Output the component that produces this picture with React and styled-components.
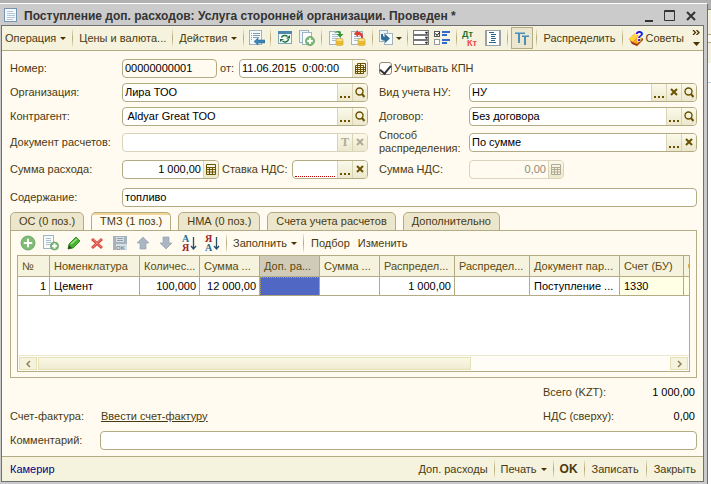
import React, { useState } from "react";
import styled, { createGlobalStyle, css } from "styled-components";

const GlobalStyle = createGlobalStyle`
  * {
    box-sizing: border-box;
  }

  body {
    margin: 0;
    background: #b0b0b0;
    color: #4a3a10;
    font-family: "Liberation Sans", Arial, sans-serif;
    font-size: 11px;
    line-height: 13px;
  }

  button, input {
    font: inherit;
    color: inherit;
    margin: 0;
    padding: 0;
  }

  button {
    border: 0;
    background: none;
    white-space: nowrap;
  }

  svg {
    display: block;
    flex: none;
  }
`

const Desktop = styled.div`
  display: flex;
  min-height: 100vh;
  padding-top: 3px;
`

const Backdrop = styled.div`
  width: 3px;
  margin-top: 6px;
  border-top: 1px solid #8a8468;
  background: linear-gradient(#f5f2dd 24px, #b3ab84 24px 25px, #fffbf0 25px 32px, #b3ab84 32px 33px, #f5f2dd 33px 53px, #fff 53px 72px, #b8cfe0 72px 73px, #fff 73px);
`

const Window = styled.div`
  flex: 1;
  min-width: 0;
  display: flex;
  flex-direction: column;
  padding: 0 3px 2px 1px;
  border-top: 1px solid #fff;
  border-right: 1px solid #6e6e6e;
  background: #cbcbcb;
`

const TitleBar = styled.header`
  display: flex;
  align-items: center;
  height: 21px;
  padding: 2px 3px 0 3px;
  color: #333;

  & h1 {
    flex: 1;
    margin: 0 0 0 6px;
    font-size: 12px;
    line-height: 14px;
    white-space: nowrap;
  }

  & button {
    width: 21px;
    height: 16px;
    display: flex;
    align-items: center;
    justify-content: center;
  }
`

const Content = styled.main`
  flex: 1;
  display: flex;
  flex-direction: column;
  border: 1px solid #707070;
  background: #fffbf0;
`

const Toolbar = styled.div`
  display: flex;
  align-items: center;
  height: 25px;
  background: #f5f2dd;
  border-bottom: 1px solid #b3ab84;
`

const ToolButton = styled.button`
  display: flex;
  align-items: center;
  justify-content: center;
  gap: ${props => props.$gap || 4}px;
  height: 22px;
  padding: 0 ${props => props.$pad || 3}px;
  font-weight: ${props => (props.$bold ? "bold" : "normal")};
  font-size: ${props => (props.$bold ? 12 : 11)}px;

  ${props => props.$pressed && css`
    background: #ebe6cd;
    border: 1px solid #b3ab84;
  `}
`

const Separator = styled.span`
  width: 1px;
  height: 18px;
  margin: 0 3px;
  background: linear-gradient(#efe9cd, #b3a878, #efe9cd);
`

const Overflow = styled.button`
  display: flex;
  flex-direction: column;
  align-items: center;
  gap: 7px;
  margin-left: auto;
  padding-right: 3px;
`

const Form = styled.div`
  display: grid;
  grid-template-columns: 112px minmax(0, 246fr) 101px minmax(0, 228fr);
  grid-template-rows: 24px 24px 24px 28px 26px 30px;
  align-items: center;
  padding: 5px 6px 0 8px;
`

const Label = styled.label`
  white-space: nowrap;
  ${props => props.$right && "padding-left: 11px;"}
`

const Line = styled.div`
  display: flex;
  align-items: center;
  ${props => props.$wide && "grid-column: 2 / -1;"}
`

const InlineLabel = styled.label`
  padding: 0 5px 0 3px;
  white-space: nowrap;
`

const Box = styled.div`
  display: flex;
  flex: ${props => (props.$width ? "none" : "1")};
  width: ${props => (props.$width ? props.$width + "px" : "auto")};
  min-width: 0;
  height: 19px;
  border: 1px solid ${props => (props.$disabled ? "#d9d4bb" : "#b3ab84")};
  border-radius: 4px;
  background: ${props => (props.$readonly ? "#fffbf0" : "#fff")};
  overflow: hidden;

  & input {
    flex: 1;
    width: 100%;
    min-width: 0;
    border: 0;
    outline: 0;
    padding: 0 2px;
    background: none;
    color: ${props => (props.$disabled ? "#8f8b7c" : "#000")};
    text-align: ${props => (props.$right ? "right" : "left")};
  }

  & input:required {
    margin: 0 2px 1px;
    border-bottom: 1px dotted #c00000;
  }

  & button {
    flex: none;
    width: 15px;
    display: flex;
    align-items: center;
    justify-content: center;
    color: ${props => (props.$disabled ? "#b0ab96" : "#6a5200")};
    border-left: 1px solid #d9d4b5;
    background: linear-gradient(#fbf9ea, #ece8cd);
  }
`

const TypeMark = styled.span`
  font: bold 12px "Liberation Serif", serif;
`

const Check = styled.label`
  grid-column: 3 / -1;
  display: flex;
  align-items: center;
  gap: 2px;
  padding-left: 11px;

  & input {
    appearance: none;
    display: flex;
    align-items: flex-start;
    justify-content: center;
    width: 13px;
    height: 13px;
    border: 1px solid #8f8a72;
    border-radius: 3px;
    background: #fff;
  }

  & input:checked::after {
    content: "";
    width: 5px;
    height: 9px;
    border: solid #333;
    border-width: 0 2px 2px 0;
    transform: rotate(40deg);
  }
`

const Tabs = styled.div`
  display: flex;
  gap: 7px;
  margin: 0 6px -1px 8px;
`

const Tab = styled.button`
  height: 19px;
  padding: 0 8px;
  border: 1px solid #b3ab84;
  border-radius: 5px 5px 0 0;
  background: #ece6cd;

  &[aria-selected="true"] {
    border-bottom-color: #fffbf0;
    background: linear-gradient(#f3d596 2px, #fffbf0 2px);
  }
`

const Panel = styled.section`
  flex: 1;
  display: flex;
  flex-direction: column;
  margin: 0 6px 0 8px;
  padding: 0 6px 5px;
  border: 1px solid #b3ab84;
`

const Commands = styled.div`
  display: flex;
  align-items: center;
  height: 24px;
`

const RowCommands = styled.div`
  display: flex;
  gap: 1px;
`

const GridFrame = styled.div`
  flex: 1;
  display: flex;
  flex-direction: column;
  border: 1px solid #b3ab84;
  background: #fff;
  overflow: hidden;
`

const GridBody = styled.div`
  flex: 1;
  min-height: 98px;
`

const Grid = styled.table`
  width: 100%;
  table-layout: fixed;
  border-collapse: separate;
  border-spacing: 0;

  & th, & td {
    padding: 0 3px 0 4px;
    border-right: 1px solid #b3ab84;
    border-bottom: 1px solid #b3ab84;
    overflow: hidden;
    white-space: nowrap;
  }

  & th:last-child, & td:last-child {
    border-right: 0;
  }
`

const Head = styled.th`
  height: 21px;
  font-weight: normal;
  text-align: left;
  color: #5c4a10;
  background: ${props => (props.$current ? "#d0cbb8" : "#f5f2dd")};
`

const Cell = styled.td`
  height: 19px;
  color: #000;
  text-align: ${props => (props.$right ? "right" : "left")};
  background: ${props => (props.$tint ? "#ffffe6" : "#fff")};

  ${props => props.$current && css`
    background: #5068c4;
    outline: 1px dotted #b3a040;
    outline-offset: -1px;
  `}
`

const ScrollBar = styled.div`
  display: flex;
  align-items: center;
  gap: 1px;
  height: 16px;
  padding: 1px;
  border-top: 1px solid #ece8d0;
  background: #fffdf5;

  & button {
    display: flex;
    align-items: center;
    justify-content: center;
    width: 18px;
    height: 13px;
    border: 1px solid #e6e0b8;
    background: #f5f2dd;
  }

  & span {
    flex: 433;
    height: 13px;
    border: 1px solid #e6e0b8;
    background: linear-gradient(#faf8e6, #efebd2);
  }

  & i {
    flex: 198;
  }
`

const Summary = styled.div`
  display: grid;
  grid-template-columns: 90px 1fr 100px 54px;
  grid-template-rows: 24px 24px 24px;
  align-items: center;
  padding: 2px 6px 4px 8px;
`

const Total = styled.output`
  padding-right: 2px;
  color: #000;
  text-align: right;
`

const TotalLabel = styled.span`
  grid-column: 3;
`

const Link = styled.a`
  padding-left: 1px;
  color: #4a3a10;
`

const StatusBar = styled.footer`
  display: flex;
  align-items: center;
  height: 25px;
  padding: 0 3px 0 8px;
  border-top: 1px solid #b3ab84;
  background: #f5f2dd;

  & > strong {
    flex: 1;
    font-weight: normal;
    color: #00008b;
  }
`

const Arrow = () => (
  <svg width="6" height="3" viewBox="0 0 6 3"><path d="M0 0h6L3 3z" fill="#4a3000" /></svg>
)

const Icon = ({ children }) => (
  <svg width="16" height="16" viewBox="0 0 16 16" fill="none">{children}</svg>
)

const Page = ({ x = 1, y = 1, w = 11, h = 13 }) => (
  <g>
    <rect x={x + 0.5} y={y + 0.5} width={w} height={h} fill="#f6fafc" stroke="#9db4c3" />
    <path d={`M${x + 3} ${y + 3.5}h${w - 5}M${x + 3} ${y + 5.5}h${w - 5}M${x + 3} ${y + 7.5}h${w - 5}M${x + 3} ${y + 9.5}h${w - 5}`} stroke="#a9bfcb" />
  </g>
)

const Plus = ({ cx, cy, r }) => (
  <g>
    <circle cx={cx} cy={cy} r={r} fill="#7fbd76" stroke="#5f9a62" strokeWidth="0.8" />
    <path d={`M${cx - r * 0.6} ${cy}h${r * 1.2}M${cx} ${cy - r * 0.6}v${r * 1.2}`} stroke="#fff" strokeWidth="2" />
  </g>
)

const Coins = () => (
  <g fill="#f5c934" stroke="#c9962b" strokeWidth="0.6">
    <ellipse cx="11.5" cy="14" rx="3.8" ry="1.6" />
    <ellipse cx="11.5" cy="12" rx="3.8" ry="1.6" />
    <ellipse cx="11.5" cy="10" rx="3.8" ry="1.6" fill="#ffe57a" />
  </g>
)

const WindowIcon = () => (
  <svg width="14" height="15" viewBox="0 0 14 15" fill="none">
    <rect x="0.5" y="0.5" width="12" height="13" fill="#f4f9fd" stroke="#7893ad" />
    <path d="M3 3.5h6M3 5.5h8M3 7.5h8M3 9.5h8M3 11.5h6" stroke="#b3c6d6" />
  </svg>
)

const ListBackIcon = () => (
  <Icon>
    <rect x="0.5" y="0.5" width="12" height="14" fill="#f6fafc" stroke="#9db4c3" />
    <path d="M2 3.500h1M2 5.500h1M2 7.500h1M2 9.500h1M4 3.500h7M4 5.500h7M4 7.500h6" stroke="#7d9db2" />
    <path d="M5 11.500l4-3.500v2h7v3H9v2z" fill="#3a87b7" stroke="#206287" strokeWidth="0.5" />
  </Icon>
)

const RefreshIcon = () => (
  <Icon>
    <rect x="1.500" y="1.500" width="13" height="12" fill="#f4f9fa" stroke="#86a6b7" />
    <path d="M1 1h14v3H1z" fill="#4b86ac" />
    <path d="M4.500 7.500a3.500 3 0 0 1 6-1M11.500 9a3.500 3 0 0 1-6 2" stroke="#21733c" strokeWidth="1.500" />
    <path d="M9 8.500h4V5zM7 9H3v3z" fill="#21733c" />
  </Icon>
)

const CopyAddIcon = () => (
  <Icon>
    <rect x="0.500" y="0.500" width="9" height="12" fill="#edf4f7" stroke="#9db4c3" />
    <rect x="3.500" y="2.500" width="9" height="12" fill="#fbfdfe" stroke="#9db4c3" />
    <Plus cx={11} cy={11} r={4.500} />
  </Icon>
)

const PostIcon = () => (
  <Icon>
    <Page />
    <path d="M6 3.500C8 0 13 0 13 4h2.500L12 7.500 8.500 4H11C11 2 8 2 6 3.500z" fill="#349532" />
    <Coins />
  </Icon>
)

const UnpostIcon = () => (
  <Icon>
    <Page />
    <path d="M4 3.500L8 0v2c4 0 5 2 5 6h-2C11 6 10.500 5 8 5v2z" fill="#e23a30" />
    <Coins />
  </Icon>
)

const BasedOnIcon = () => (
  <Icon>
    <rect x="1.500" y="0.500" width="8" height="11" fill="#edf4f7" stroke="#9db4c3" />
    <rect x="6.500" y="3.500" width="8" height="11" fill="#fbfdfe" stroke="#9db4c3" />
    <path d="M3 4v4c0 2 1 2.500 4 2.500V13l5-4.500L7 4v3C5 7 5 6 5 4z" fill="#2c6f99" />
  </Icon>
)

const RowsIcon = () => (
  <Icon>
    <g stroke="#777" fill="#fff">
      <rect x="0.500" y="0.500" width="15" height="4" />
      <rect x="0.500" y="5.500" width="15" height="4" />
      <rect x="0.500" y="10.500" width="15" height="4" />
    </g>
    <path d="M12 1h3v3h-3zM12 6h3v3h-3zM12 11h3v3h-3z" fill="#d0d0d0" />
    <path d="M12 2h3l-1.500 2zM12 7h3l-1.500 2zM12 12h3l-1.500 2z" fill="#222" />
  </Icon>
)

const SettingsIcon = () => (
  <Icon>
    <rect x="0.500" y="1.500" width="5" height="5" fill="#fff" stroke="#555" />
    <rect x="0.500" y="9.500" width="5" height="5" fill="#fff" stroke="#999" />
    <path d="M1.500 3.500l1.500 2 2.500-3" stroke="#000" />
    <path d="M8 2h8M8 5h5M8 10h8M8 13h5" stroke="#316bd2" strokeWidth="2" />
  </Icon>
)

const DebitCreditIcon = () => (
  <svg width="18" height="18" viewBox="0 0 18 18" fontWeight="bold" fontSize="9">
    <text x="0" y="8" fill="#24732a">Дт</text>
    <text x="5" y="17" fill="#f04848">Кт</text>
  </svg>
)

const JournalIcon = () => (
  <Icon>
    <path d="M0 0h16v16H0z" fill="#9aa2a8" />
    <path d="M2 1h12v14H2z" fill="#fff" />
    <path d="M4 2.500h5M6 4.500h5M6 6.500h4M6 8.500h5M6 10.500h4M4 12.500h7" stroke="#286989" />
  </Icon>
)

const FontIcon = () => (
  <svg width="16" height="16" viewBox="0 0 16 16" fill="none" stroke="#4f8fb3" strokeWidth="2">
    <path d="M1 3h10M5 3v10M8 6h7M11 6v9" />
    <path d="M1 2.500h10M8 5.500h7" stroke="#8fbad0" strokeWidth="1" />
  </svg>
)

const TipsIcon = () => (
  <Icon>
    <path d="M0 9l6-6 8 6-6 7-5-3z" fill="#e58b16" />
    <path d="M0 9l6-6 3 3-5 6z" fill="#ffd33c" />
    <path d="M4 12l5-5 5 2-6 6z" fill="#f6a71f" />
    <path d="M1 11l7 3 6-6v2l-6 6-5-2z" fill="#a43715" />
    <text x="6" y="11" fontSize="14" fontWeight="bold" fill="#1616e0" stroke="#fff" strokeWidth="1" paintOrder="stroke">?</text>
  </Icon>
)

const AddIcon = () => <Icon><Plus cx={8} cy={8} r={7} /></Icon>

const AddCopyIcon = () => (
  <Icon>
    <Page x={0} y={0} w={10} h={13} />
    <Plus cx={11.500} cy={11} r={4} />
  </Icon>
)

const EditIcon = () => (
  <Icon>
    <path d="M2 14l1-5 7-7 4 4-7 7z" fill="#45b52c" stroke="#277d1b" strokeWidth="0.8" />
    <path d="M5 9l6-5" stroke="#a4e48b" strokeWidth="1.500" />
    <path d="M2 14l1-4 3 3z" fill="#2d491e" />
  </Icon>
)

const DeleteIcon = () => (
  <Icon>
    <path d="M3 4l10 9M13 4L3 13" stroke="#d9453c" strokeWidth="3" />
    <path d="M3.500 4l9 8.500M12.500 4l-9 8.500" stroke="#f28c82" />
  </Icon>
)

const SaveIcon = () => (
  <Icon>
    <path d="M1 1h14v14H1z" fill="#a6b3bd" />
    <path d="M4 2h8v5H4zM4 9h11v6H4z" fill="#d7dfe4" />
    <path d="M5 3.500h6M5 5.500h6" stroke="#91a0ab" />
    <text x="4" y="15" fontSize="6" fontWeight="bold" fill="#7d8b95">OK</text>
  </Icon>
)

const MoveIcon = ({ down }) => (
  <Icon>
    <path d={down ? "M5 2h6v6h3l-6 6-6-6h3z" : "M5 14h6V8h3L8 2 2 8h3z"} fill="#aab7c2" stroke="#94a3b0" strokeWidth="0.7" />
  </Icon>
)

const SortIcon = ({ top, bottom }) => (
  <svg width="16" height="18" viewBox="0 0 16 18" fontFamily="Liberation Serif, serif" fontSize="10" fontWeight="bold">
    <text x="1" y="8" fill={top === "А" ? "#286a92" : "#9b2424"}>{top}</text>
    <text x="1" y="17" fill={bottom === "А" ? "#286a92" : "#9b2424"}>{bottom}</text>
    <path d="M12.500 3v12M10 12l2.500 3 2.500-3" stroke="#284d66" fill="none" strokeWidth="1.300" />
  </svg>
)

const Dots = () => (
  <svg width="10" height="13" viewBox="0 0 10 13"><path d="M0 10h2v2H0zM4 10h2v2H4zM8 10h2v2H8z" fill="currentColor" /></svg>
)

const Cross = () => (
  <svg width="8" height="8" viewBox="0 0 8 8" stroke="currentColor" strokeWidth="2"><path d="M1 1l6 6M7 1L1 7" /></svg>
)

const Lens = () => (
  <svg width="10" height="11" viewBox="0 0 10 11" fill="none" stroke="currentColor">
    <circle cx="4.500" cy="4.500" r="3.500" strokeWidth="1.400" />
    <path d="M7 7l2.500 3" strokeWidth="2" />
  </svg>
)

const Calc = () => (
  <svg width="10" height="11" viewBox="0 0 10 11" fill="none" stroke="currentColor">
    <path d="M0.500 0.500h9v10h-9zM0.500 3.500h9M0.500 5.500h9M0.500 8h9M3.500 3.500v7M6.500 3.500v7" />
  </svg>
)

const Calendar = () => (
  <svg width="11" height="11" viewBox="0 0 11 11" fill="none" stroke="currentColor">
    <path d="M2.500 0.500h8v8M0.500 2.500h8v8h-8zM2.500 0.500v10M5.500 0.500v10M0.500 4.500h10M0.500 6.500h10M0.500 8.500h10" />
  </svg>
)

const Chevron = ({ right }) => (
  <svg width="5" height="8" viewBox="0 0 5 8" fill="none" stroke="#8b8158" strokeWidth="1.500">
    <path d={right ? "M1 1l3 3-3 3" : "M4 1L1 4l3 3"} />
  </svg>
)

const GLYPHS = {
  dots: ["Выбрать", <Dots />],
  cross: ["Очистить", <Cross />],
  lens: ["Открыть", <Lens />],
  calc: ["Калькулятор", <Calc />],
  calendar: ["Календарь", <Calendar />],
  type: ["Тип", <TypeMark>T</TypeMark>]
}

const Field = ({ id, value = "", buttons = [], width, right, disabled, readOnly, required }) => (
  <Box $width={width} $right={right} $disabled={disabled} $readonly={readOnly}>
    <input id={id} defaultValue={value} disabled={disabled} readOnly={readOnly} required={required} />
    {buttons.map(name => (
      <button key={name} type="button" aria-label={GLYPHS[name][0]} disabled={disabled}>{GLYPHS[name][1]}</button>
    ))}
  </Box>
)

const Tool = ({ label, children, ...rest }) => (
  <ToolButton type="button" aria-label={label} {...rest}>{children}</ToolButton>
)

const TABS = ["ОС (0 поз.)", "ТМЗ (1 поз.)", "НМА (0 поз.)", "Счета учета расчетов", "Дополнительно"]

const COLUMNS = [
  { title: "№", width: 32, value: "1", right: true },
  { title: "Номенклатура", width: 90, value: "Цемент" },
  { title: "Количес...", width: 60, value: "100,000", right: true },
  { title: "Сумма ...", width: 60, value: "12 000,00", right: true },
  { title: "Доп. ра...", width: 60, value: "", current: true },
  { title: "Сумма ...", width: 60, value: "" },
  { title: "Распредел...", width: 75, value: "1 000,00", right: true },
  { title: "Распредел...", width: 75, value: "" },
  { title: "Документ пар...", width: 90, value: "Поступление ..." },
  { title: "Счет (БУ)", width: 64, value: "1330", tint: true },
  { title: "С", value: "", tint: true }
]

const App = () => {
  const [tab, setTab] = useState(1);

  return (
    <Desktop>
      <GlobalStyle />
      <Window>
        <TitleBar>
          <WindowIcon />
          <h1>Поступление доп. расходов: Услуга сторонней организации. Проведен *</h1>
          <button aria-label="Свернуть"><svg width="8" height="12"><path d="M0 10h8v2H0z" fill="#333" /></svg></button>
          <button aria-label="Развернуть"><svg width="11" height="11" fill="none" stroke="#333"><path d="M0.500 0.500h10v10H0.500zM0 1.500h11" /></svg></button>
          <button aria-label="Закрыть окно"><svg width="10" height="10" stroke="#333" strokeWidth="2"><path d="M1 1l8 8M9 1L1 9" /></svg></button>
        </TitleBar>

        <Content>
          <Toolbar>
            <ToolButton>Операция <Arrow /></ToolButton>
            <Separator />
            <ToolButton>Цены и валюта...</ToolButton>
            <Separator />
            <ToolButton>Действия <Arrow /></ToolButton>
            <Separator />
            <Tool label="Найти в списке" $pad={2}><ListBackIcon /></Tool>
            <Separator />
            <Tool label="Перечитать"><RefreshIcon /></Tool>
            <Tool label="Скопировать"><CopyAddIcon /></Tool>
            <Separator />
            <Tool label="Провести"><PostIcon /></Tool>
            <Tool label="Отмена проведения"><UnpostIcon /></Tool>
            <Separator />
            <Tool label="Ввести на основании" $gap={2} $pad={2}><BasedOnIcon /><Arrow /></Tool>
            <Separator />
            <Tool label="Реквизиты" $pad={2}><RowsIcon /></Tool>
            <Tool label="Настройка"><SettingsIcon /></Tool>
            <Separator />
            <Tool label="Проводки" $pad={2}><DebitCreditIcon /></Tool>
            <Tool label="Журнал"><JournalIcon /></Tool>
            <Separator />
            <Tool label="Шрифт" $pressed $pad={2}><FontIcon /></Tool>
            <Separator />
            <ToolButton>Распределить</ToolButton>
            <Separator />
            <ToolButton $gap={1}><TipsIcon />Советы</ToolButton>
            <Overflow aria-label="Еще">
              <svg width="8" height="5" fill="none" stroke="#4a3000" strokeWidth="1.300"><path d="M1 0l2.500 2.500L1 5M4.500 0L7 2.500 4.500 5" /></svg>
              <svg width="7" height="4"><path d="M0 0h7L3.500 4z" fill="#4a3000" /></svg>
            </Overflow>
          </Toolbar>

          <Form>
            <Label htmlFor="number">Номер:</Label>
            <Line>
              <Field id="number" value="00000000001" width={95} readOnly />
              <InlineLabel htmlFor="date">от:</InlineLabel>
              <Field id="date" value="11.06.2015  0:00:00" buttons={["calendar"]} />
            </Line>
            <Check><input type="checkbox" defaultChecked />Учитывать КПН</Check>

            <Label htmlFor="org">Организация:</Label>
            <Field id="org" value="Лира ТОО" buttons={["dots", "lens"]} />
            <Label $right htmlFor="kind">Вид учета НУ:</Label>
            <Field id="kind" value="НУ" buttons={["dots", "cross", "lens"]} />

            <Label htmlFor="partner">Контрагент:</Label>
            <Field id="partner" value=" Aldyar Great ТОО" buttons={["dots", "lens"]} />
            <Label $right htmlFor="contract">Договор:</Label>
            <Field id="contract" value="Без договора" buttons={["dots", "lens"]} />

            <Label htmlFor="doc">Документ расчетов:</Label>
            <Field id="doc" buttons={["type", "cross"]} disabled />
            <Label $right htmlFor="method">Способ<br />распределения:</Label>
            <Field id="method" value="По сумме" buttons={["dots", "cross"]} />

            <Label htmlFor="sum">Сумма расхода:</Label>
            <Line>
              <Field id="sum" value="1 000,00" width={97} buttons={["calc"]} right />
              <InlineLabel htmlFor="rate">Ставка НДС:</InlineLabel>
              <Field id="rate" buttons={["dots", "cross"]} required />
            </Line>
            <Label $right htmlFor="vat">Сумма НДС:</Label>
            <Field id="vat" value="0,00" width={95} buttons={["calc"]} right disabled readOnly />

            <Label htmlFor="content">Содержание:</Label>
            <Line $wide><Field id="content" value="топливо" /></Line>
          </Form>

          <Tabs role="tablist">
            {TABS.map((title, index) => (
              <Tab key={title} role="tab" aria-selected={index === tab} onClick={() => setTab(index)}>{title}</Tab>
            ))}
          </Tabs>
          <Panel>
            <Commands>
              <RowCommands>
                <Tool label="Добавить"><AddIcon /></Tool>
                <Tool label="Добавить копированием"><AddCopyIcon /></Tool>
                <Tool label="Изменить строку"><EditIcon /></Tool>
                <Tool label="Удалить"><DeleteIcon /></Tool>
                <Tool label="Закончить редактирование"><SaveIcon /></Tool>
                <Tool label="Вверх"><MoveIcon /></Tool>
                <Tool label="Вниз"><MoveIcon down /></Tool>
                <Tool label="По возрастанию"><SortIcon top="А" bottom="Я" /></Tool>
                <Tool label="По убыванию"><SortIcon top="Я" bottom="А" /></Tool>
              </RowCommands>
              <Separator />
              <ToolButton>Заполнить <Arrow /></ToolButton>
              <Separator />
              <ToolButton $pad={4}>Подбор</ToolButton>
              <ToolButton $pad={4}>Изменить</ToolButton>
            </Commands>
            <GridFrame>
              <GridBody>
                <Grid>
                  <colgroup>
                    {COLUMNS.map((column, index) => <col key={index} width={column.width} />)}
                  </colgroup>
                  <thead>
                    <tr>
                      {COLUMNS.map((column, index) => (
                        <Head key={index} $current={column.current}>{column.title}</Head>
                      ))}
                    </tr>
                  </thead>
                  <tbody>
                    <tr>
                      {COLUMNS.map((column, index) => (
                        <Cell key={index} $right={column.right} $current={column.current} $tint={column.tint}>{column.value}</Cell>
                      ))}
                    </tr>
                  </tbody>
                </Grid>
              </GridBody>
              <ScrollBar>
                <button aria-label="Влево"><Chevron /></button>
                <span />
                <i />
                <button aria-label="Вправо"><Chevron right /></button>
              </ScrollBar>
            </GridFrame>
          </Panel>

          <Summary>
            <TotalLabel>Всего (KZT):</TotalLabel>
            <Total>1 000,00</Total>
            <span>Счет-фактура:</span>
            <div><Link href="#invoice">Ввести счет-фактуру</Link></div>
            <TotalLabel>НДС (сверху):</TotalLabel>
            <Total>0,00</Total>
            <Label htmlFor="comment">Комментарий:</Label>
            <Line $wide><Field id="comment" /></Line>
          </Summary>

          <StatusBar>
            <strong>Камерир</strong>
            <ToolButton>Доп. расходы</ToolButton>
            <Separator />
            <ToolButton>Печать <Arrow /></ToolButton>
            <Separator />
            <ToolButton $bold>OK</ToolButton>
            <Separator />
            <ToolButton $pad={4}>Записать</ToolButton>
            <Separator />
            <ToolButton $pad={4}>Закрыть</ToolButton>
          </StatusBar>
        </Content>
      </Window>
      <Backdrop />
    </Desktop>
  )
};

export default App;
